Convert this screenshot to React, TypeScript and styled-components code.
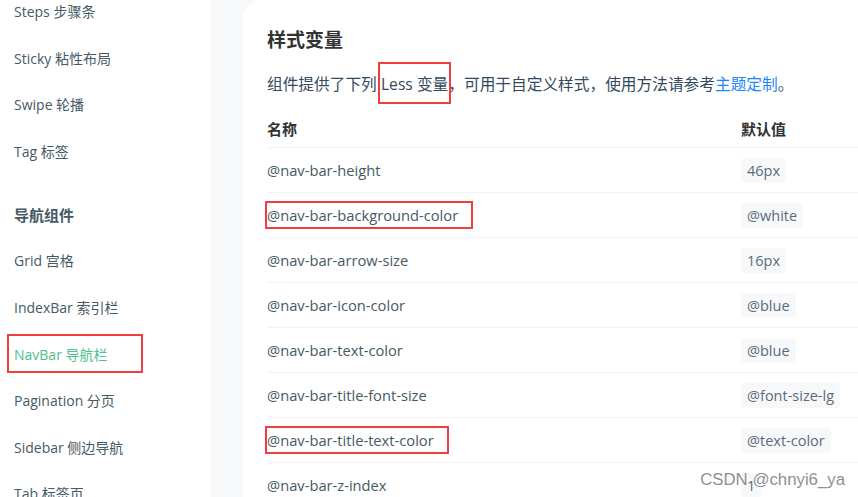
import styled, {createGlobalStyle} from "styled-components";

const GlobalStyle = createGlobalStyle`
    html, body {
        margin: 0;
        padding: 0;
        height: 497px;
        overflow: hidden;
        background: #f7f8fa;
    }
    body {
        font-family: "Open Sans", "Noto Sans CJK SC", sans-serif;
        color: #455a64;
        -webkit-font-smoothing: antialiased;
    }
`;

type NavItem = {label: string; active?: boolean};
type NavGroup = {title?: string; items: NavItem[]};

const groups: NavGroup[] = [
    {
        items: [
            {label: "Steps 步骤条"},
            {label: "Sticky 粘性布局"},
            {label: "Swipe 轮播"},
            {label: "Tag 标签"},
        ],
    },
    {
        title: "导航组件",
        items: [
            {label: "Grid 宫格"},
            {label: "IndexBar 索引栏"},
            {label: "NavBar 导航栏", active: true},
            {label: "Pagination 分页"},
            {label: "Sidebar 侧边导航"},
            {label: "Tab 标签页"},
        ],
    },
];

type Variable = {name: string; value: string; marked?: boolean};

const variables: Variable[] = [
    {name: "@nav-bar-height", value: "46px"},
    {name: "@nav-bar-background-color", value: "@white", marked: true},
    {name: "@nav-bar-arrow-size", value: "16px"},
    {name: "@nav-bar-icon-color", value: "@blue"},
    {name: "@nav-bar-text-color", value: "@blue"},
    {name: "@nav-bar-title-font-size", value: "@font-size-lg"},
    {name: "@nav-bar-title-text-color", value: "@text-color", marked: true},
    {name: "@nav-bar-z-index", value: "1"},
];

export default function App() {
    return (
        <>
            <GlobalStyle/>
            <Page>
                <Sidebar>
                    <NavList>
                        {groups.map((group, gi) => (
                            <div key={gi}>
                                {group.title && <GroupTitle>{group.title}</GroupTitle>}
                                {group.items.map((item) => (
                                    <NavLink key={item.label} $active={item.active}>
                                        {item.active ? <NavMark>{item.label}</NavMark> : item.label}
                                    </NavLink>
                                ))}
                            </div>
                        ))}
                    </NavList>
                </Sidebar>
                <Main>
                    <Card>
                        <Title>样式变量</Title>
                        <Desc>
                            组件提供了下列 <LessMark>Less 变量</LessMark>，可用于自定义样式，使用方法请参考
                            <Link>主题定制</Link>。
                        </Desc>
                        <Table>
                            <HeadRow>
                                <HeadCell>名称</HeadCell>
                                <HeadCell>默认值</HeadCell>
                            </HeadRow>
                            {variables.map((v) => (
                                <Row key={v.name}>
                                    <NameCell>
                                        {v.marked ? <RowMark>{v.name}</RowMark> : v.name}
                                    </NameCell>
                                    <div>
                                        <Code>{v.value}</Code>
                                    </div>
                                </Row>
                            ))}
                        </Table>
                    </Card>
                </Main>
                <Watermark>CSDN @chnyi6_ya</Watermark>
            </Page>
        </>
    );
}

const Page = styled.div`
    position: relative;
    display: flex;
    width: 858px;
    height: 497px;
    overflow: hidden;
    background: #f7f8fa;
`;

const Sidebar = styled.aside`
    flex: 0 0 211px;
    background: #fff;
    overflow: hidden;
`;

const NavList = styled.div`
    margin-top: -11px;
`;

const GroupTitle = styled.div`
    padding: 26px 0 0 14px;
    margin-bottom: 9px;
    line-height: 28px;
    font-size: 15px;
    font-weight: 700;
    color: #455a64;
`;

const NavLink = styled.div<{$active?: boolean}>`
    padding-left: 14px;
    height: 46.6px;
    line-height: 46.6px;
    font-size: 14px;
    color: ${(p) => (p.$active ? "#4fc08d" : "#455a64")};
    white-space: nowrap;
`;

const NavMark = styled.span`
    position: relative;

    &::after {
        content: "";
        position: absolute;
        top: -11px;
        bottom: -9px;
        left: -7px;
        right: -35px;
        border: 2px solid #f03e3e;
    }
`;

const Main = styled.main`
    flex: 1;
    padding-left: 32px;
    min-width: 0;
`;

const Card = styled.section`
    width: 760px;
    min-height: 520px;
    padding: 26px 24px 0;
    background: #fff;
    border-radius: 18px;
`;

const Title = styled.h3`
    margin: 0;
    line-height: 28px;
    font-size: 19px;
    font-weight: 700;
    color: #323233;
`;

const Desc = styled.p`
    margin: 17px 0 0;
    line-height: 26px;
    font-size: 15.7px;
    color: #34495e;
    white-space: nowrap;
`;

const LessMark = styled.span`
    position: relative;

    &::after {
        content: "";
        position: absolute;
        top: -11px;
        bottom: -9px;
        left: -3px;
        right: -3px;
        border: 2px solid #f03e3e;
    }
`;

const Link = styled.a`
    color: #1989fa;
    text-decoration: none;
`;

const Table = styled.div`
    margin-top: 10px;
`;

const rowColumns = `
    display: grid;
    grid-template-columns: 474px 1fr;
    align-items: center;
`;

const HeadRow = styled.div`
    ${rowColumns};
    height: 41px;
    padding-top: 3px;
    box-sizing: border-box;
    border-bottom: 1px solid #f1f3f6;
`;

const HeadCell = styled.div`
    font-size: 15px;
    font-weight: 700;
    color: #323233;
`;

const Row = styled.div`
    ${rowColumns};
    height: 45px;
    box-sizing: border-box;
    border-bottom: 1px solid #f1f3f6;
`;

const NameCell = styled.div`
    font-size: 14.7px;
    color: #455a64;
    white-space: nowrap;
`;

const RowMark = styled.span`
    position: relative;

    &::after {
        content: "";
        position: absolute;
        top: -4px;
        bottom: -4px;
        left: -2px;
        right: -15px;
        border: 2px solid #f03e3e;
    }
`;

const Code = styled.span`
    display: inline-block;
    padding: 0 6px;
    line-height: 25px;
    font-size: 14.5px;
    color: #5b6b7c;
    background: #f7f8fa;
    border-radius: 4px;
`;

const Watermark = styled.div`
    position: absolute;
    right: 13px;
    bottom: 7px;
    font-family: "Liberation Sans", Arial, sans-serif;
    font-size: 16.8px;
    color: #8f8f8f;
    text-shadow: 0 0 2px #fff;
    pointer-events: none;
`;
